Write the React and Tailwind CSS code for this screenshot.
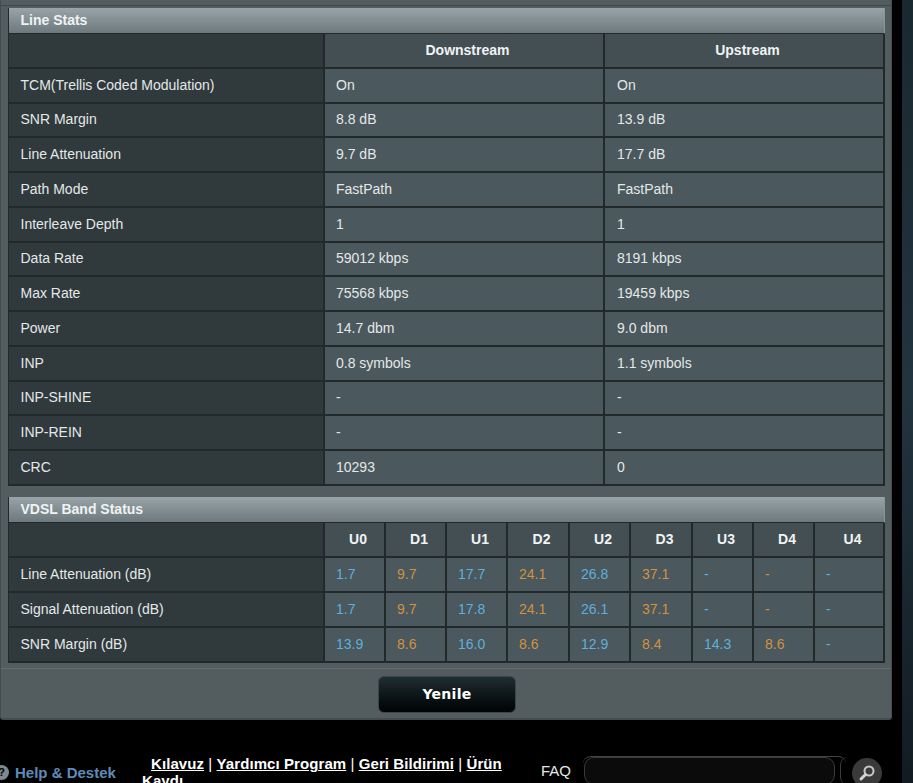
const F = { fontFamily: '"Liberation Sans", Arial, sans-serif' };

const stats = [
  ["TCM(Trellis Coded Modulation)", "On", "On"],
  ["SNR Margin", "8.8 dB", "13.9 dB"],
  ["Line Attenuation", "9.7 dB", "17.7 dB"],
  ["Path Mode", "FastPath", "FastPath"],
  ["Interleave Depth", "1", "1"],
  ["Data Rate", "59012 kbps", "8191 kbps"],
  ["Max Rate", "75568 kbps", "19459 kbps"],
  ["Power", "14.7 dbm", "9.0 dbm"],
  ["INP", "0.8 symbols", "1.1 symbols"],
  ["INP-SHINE", "-", "-"],
  ["INP-REIN", "-", "-"],
  ["CRC", "10293", "0"],
];

const bandHead = ["U0", "D1", "U1", "D2", "U2", "D3", "U3", "D4", "U4"];
const bands = [
  ["Line Attenuation (dB)", ["1.7", "9.7", "17.7", "24.1", "26.8", "37.1", "-", "-", "-"]],
  ["Signal Attenuation (dB)", ["1.7", "9.7", "17.8", "24.1", "26.1", "37.1", "-", "-", "-"]],
  ["SNR Margin (dB)", ["13.9", "8.6", "16.0", "8.6", "12.9", "8.4", "14.3", "8.6", "-"]],
];

function Title({ children }) {
  return (
    <div className="h-[26px] flex items-center pl-[11.5px] pb-[1px] text-[14px] leading-none font-bold text-[#f0f3f3] bg-gradient-to-b from-[#98a4a8] to-[#6d797d] border-b border-[#23282a] border-r border-r-[#8a9599]">
      {children}
    </div>
  );
}

const label = "bg-[#30393c] text-[#e4e8e8] pl-[11.5px] flex items-center border-r-2 border-b-2 border-[#22292b]";
const val = "bg-[#4b585d] text-[#e4e8e8] pl-[11px] flex items-center border-r-2 border-b-2 border-[#22292b]";
const head = "bg-[#434f53] text-[#f0f3f3] font-bold pl-[7px] flex items-center justify-center border-r-2 border-b-2 border-[#22292b]";

export default function App() {
  return (
    <div style={F} className="w-[913px] h-[783px] overflow-hidden bg-black relative text-[14px]">
      <div className="absolute right-0 top-0 bottom-0 w-[11px] bg-gradient-to-b from-[#1a2830] via-[#22343f] to-[#121b22]" />
      <div className="w-[892px] h-[720px] bg-[#535d60] rounded-b-[3px] border-b-2 border-x border-[#434c4e] pt-[5px] relative">
        <div className="border-t border-[#3f484a] pt-[2px]">
          <div className="w-[877px] ml-[7px] border-l border-[#22292b]">
            <Title>Line Stats</Title>
            <div className="grid grid-cols-[316px_280px_280px] auto-rows-[34.75px]">
              <div className={label} />
              <div className={head}>Downstream</div>
              <div className={head}>Upstream</div>
              {stats.map(([a, b, c]) => [
                <div key={a + "l"} className={label}>{a}</div>,
                <div key={a + "b"} className={val}>{b}</div>,
                <div key={a + "c"} className={`${val} pl-[12px]`}>{c}</div>,
              ])}
            </div>
          </div>
          <div className="w-[877px] ml-[7px] mt-[11.5px] border-l border-[#22292b]">
            <Title>VDSL Band Status</Title>
            <div className="grid grid-cols-[316px_61px_61px_61px_62px_61px_62px_61px_61px_70px] auto-rows-[35px]">
              <div className={label} />
              {bandHead.map((h) => (
                <div key={h} className={head}>{h}</div>
              ))}
              {bands.map(([name, vals]) => [
                <div key={name} className={label}>{name}</div>,
                ...vals.map((v, i) => (
                  <div key={name + i} className={val}>
                    <span className={i % 2 ? "text-[#d2923f]" : "text-[#5db0dc]"}>{v}</span>
                  </div>
                )),
              ])}
            </div>
          </div>
          <div className="mt-[5px] border-t border-[#646e70] flex justify-center pt-[7px]">
            <button
              style={{ fontFamily: '"DejaVu Sans", sans-serif' }}
              className="w-[138px] h-[37px] ml-[2px] rounded-[6px] bg-gradient-to-b from-[#1f2e33] to-[#020405] border border-[#3c4649] text-white font-bold text-[14px] tracking-[0.3px]"
            >
              Yenile
            </button>
          </div>
        </div>
      </div>

      <div className="absolute left-0 top-[756px] w-[902px] h-[27px]">
        <div className="absolute left-[-6px] top-[9px] w-[15px] h-[15px] rounded-full bg-[#7f8a90] text-black text-[11px] font-bold flex items-center justify-center">?</div>
        <div className="absolute left-[15px] top-[9px] text-[15px] font-bold text-[#5f8bb8] leading-none">Help &amp; Destek</div>
        <div className="absolute left-[142px] top-[-1px] w-[370px] text-white font-bold text-[15px] tracking-[0.08px] leading-[17px]">
          <span className="pl-[9px]"><u>Kılavuz</u></span><span className="font-normal"> | </span><u>Yardımcı Program</u><span className="font-normal"> | </span><u>Geri Bildirimi</u><span className="font-normal"> | </span><u>Ürün Kaydı</u>
        </div>
        <div className="absolute left-[541px] top-[7px] text-[#e4e8e8] text-[15px] leading-none">FAQ</div>
        <div className="absolute left-[583px] top-0 w-[263px] h-[29px] rounded-t-[8px] border-t border-[#444]" />
        <div className="absolute left-[584px] top-[1px] w-[251px] h-[28px] rounded-[10px] bg-[#0b0b0b] border border-[#3a3a3a]" />
        <div className="absolute left-[840px] top-[1px] w-[8px] h-[28px] rounded-l-[8px] border-l border-[#3a3a3a]" />
        <div className="absolute left-[852px] top-[2px] w-[30px] h-[30px] rounded-full bg-[#3a3a3a] flex items-center justify-center">
          <svg width="18" height="18" viewBox="0 0 18 18" fill="none">
            <circle cx="11" cy="7" r="4.5" stroke="#c9c9c9" strokeWidth="2" />
            <path d="M7.5 10.5 L3 15" stroke="#d4d4d4" strokeWidth="3" strokeLinecap="round" />
          </svg>
        </div>
      </div>
    </div>
  );
}
